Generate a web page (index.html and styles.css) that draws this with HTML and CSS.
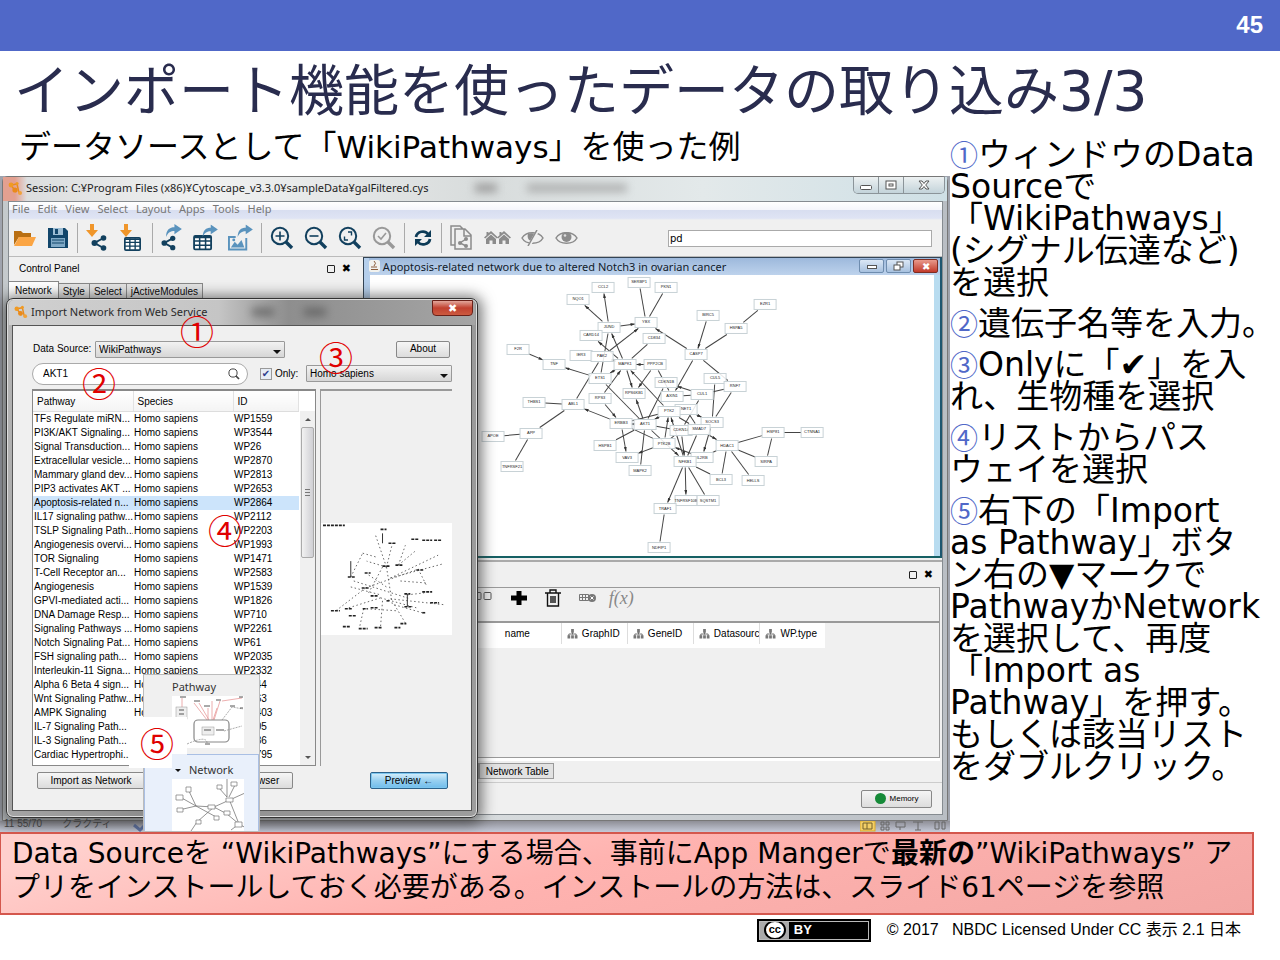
FILE: index.html
```html
<!DOCTYPE html>
<html lang="ja">
<head>
<meta charset="utf-8">
<title>インポート機能を使ったデータの取り込み3/3</title>
<link rel="stylesheet" href="styles.css">
</head>
<body>
<svg class="defs" width="0" height="0" aria-hidden="true">
  <defs>
    <marker id="tip" viewBox="0 0 6 4" refX="6" refY="2" markerWidth="5" markerHeight="3" markerUnits="userSpaceOnUse" orient="auto"><path d="M0 0L6 2L0 4Z" fill="#333"/></marker>
    <symbol id="cyto" viewBox="0 0 16 16"><path d="M4 5L10 4M4 5L9 12M10 4L12 13" stroke="#e98b1c" stroke-width="1.5"/><circle cx="4" cy="5" r="2.4" fill="#f09a22"/><circle cx="10" cy="3.500" r="1.600" fill="#f09a22"/><circle cx="8" cy="10" r="2.600" fill="#ea8a1a"/><circle cx="13" cy="13" r="2" fill="#f0a23a"/></symbol>
    <symbol id="share" viewBox="0 0 16 16"><path d="M12.500 3L3.500 8L12.500 13" fill="none" stroke="currentColor" stroke-width="2"/><circle cx="12.500" cy="3" r="2.800" fill="currentColor"/><circle cx="3.500" cy="8" r="3" fill="currentColor"/><circle cx="12.500" cy="13" r="2.800" fill="currentColor"/></symbol>
    <symbol id="grid" viewBox="0 0 16 13"><rect x=".8" y=".8" width="14.400" height="11.400" rx="1" fill="#fff" stroke="currentColor" stroke-width="1.600"/><path d="M1 2h14M1 5h14M1 8.500h14M5.500 1v11M10.500 1v11" stroke="currentColor" stroke-width="1.300"/></symbol>
    <symbol id="down" viewBox="0 0 12 13"><path d="M4 0h4v6h4L6 13L0 6h4z" fill="#f0962a"/></symbol>
    <symbol id="out" viewBox="0 0 18 14"><path d="M1 14C1 6 5 3.500 10 3.500V0L18 5.500L10 11V7.500C6 7.500 3 9 1 14z" fill="#5a93bd"/></symbol>
    <symbol id="lens" viewBox="0 0 24 24"><circle cx="10" cy="10" r="8.200" fill="none" stroke="currentColor" stroke-width="2"/><path d="M16 16L22 22" stroke="currentColor" stroke-width="3.400"/></symbol>
    <symbol id="tree" viewBox="0 0 12 11"><path d="M6 3v3M2 8V5.500h8V8" fill="none" stroke="#666"/><path d="M4.500 0h3v4h-3zM.5 7h3v3.500h-3zM4.500 7h3v3.500h-3zM8.500 7h3v3.500h-3z" fill="#777"/></symbol>
    <symbol id="house" viewBox="0 0 14 13"><path d="M7 0L14 6.500L12.800 7.600L7 2.400L1.200 7.600L0 6.500L2.500 4.200V1h2v1.300zM7 3.500L12 8v5H8.500V9.500h-3V13H2V8z" fill="#8b8b8b"/></symbol>
  </defs>
</svg>
<div class="slide">
  <header class="band">45</header>
  <h1 class="title">インポート機能を使ったデータの取り込み3/3</h1>
  <main class="columns">
    <section class="left">
      <p class="subtitle">データソースとして「<span class="lat">WikiPathways</span>」を使った例</p>
      <div class="desktop">
        <div class="app">
          <div class="app-title">
            <svg width="16" height="16"><use href="#cyto"/></svg>
            <span>Session: C:¥Program Files (x86)¥Cytoscape_v3.3.0¥sampleData¥galFiltered.cys</span>
            <span class="ghosts"><i></i><i class="wide"></i></span>
            <span class="winbtns">
              <button aria-label="Minimize"><svg width="12" height="10"><rect x=".5" y="5.500" width="11" height="4" rx="1" fill="#fff" stroke="#555"/></svg></button>
              <button aria-label="Maximize"><svg width="12" height="10"><rect x="1" y="1" width="10" height="8" fill="#fff" stroke="#555"/><rect x="4" y="4" width="4" height="2" fill="#fff" stroke="#555"/></svg></button>
              <button class="wide" aria-label="Close"><svg width="12" height="10" viewBox="0 0 12 10"><path d="M1 1h3l2 2.500L8 1h3L7.700 5L11 9H8L6 6.500L4 9H1l3.300-4z" fill="#fff" stroke="#555"/></svg></button>
            </span>
          </div>
          <div class="app-body">
            <nav class="menubar"><a href="#">File</a><a href="#">Edit</a><a href="#">View</a><a href="#">Select</a><a href="#">Layout</a><a href="#">Apps</a><a href="#">Tools</a><a href="#">Help</a></nav>
            <div class="toolbar">
              <button aria-label="Open"><svg width="24" height="20" viewBox="0 0 24 20"><path d="M1 17V3h7l2 2h8v4H6z" fill="#b96f12"/><path d="M6 9h17l-4 9H1z" fill="#fba544"/></svg></button>
              <button aria-label="Save"><svg width="22" height="22" viewBox="0 0 22 22"><path d="M1 1h17l3 3v17H1z" fill="#12466b"/><rect x="6" y="1" width="10" height="7" fill="#9dbdd4"/><rect x="8" y="2" width="3" height="5" fill="#12466b"/><rect x="4" y="11" width="14" height="9" fill="#7fa9c6"/><path d="M5 13h12M5 16h12" stroke="#12466b"/></svg></button>
              <hr>
              <button aria-label="Import network"><svg class="navy" width="24" height="28" viewBox="0 0 24 28"><use href="#down" x="0" y="0" width="12" height="13"/><use href="#share" x="5" y="11" width="16" height="16"/></svg></button>
              <button aria-label="Import table"><svg class="navy" width="24" height="28" viewBox="0 0 24 28"><use href="#down" x="0" y="0" width="12" height="13"/><use href="#grid" x="4" y="13" width="17" height="14"/></svg></button>
              <hr>
              <button aria-label="Export network"><svg class="navy" width="22" height="28" viewBox="1 0 22 28"><use href="#share" x="1" y="11" width="15" height="16"/><use href="#out" x="5" y="0" width="17" height="13"/></svg></button>
              <button aria-label="Export table"><svg class="navy" width="25" height="28" viewBox="0 0 26 28"><use href="#grid" x="0" y="11" width="20" height="16"/><use href="#out" x="9" y="0" width="17" height="13"/></svg></button>
              <button aria-label="Export image"><svg width="25" height="28" viewBox="0 0 26 28"><path d="M8 13H1v13h18V14" fill="none" stroke="#5a93bd" stroke-width="2"/><path d="M3 24l4-6l3 3l4-5l3 8z" fill="#5a93bd"/><circle cx="6" cy="16" r="1.500" fill="#5a93bd"/><use href="#out" x="9" y="0" width="17" height="13"/></svg></button>
              <hr>
              <button aria-label="Zoom in"><svg class="navy" width="24" height="24" viewBox="0 0 24 24"><use href="#lens"/><path d="M5.500 10h9M10 5.500v9" stroke="currentColor" stroke-width="1.600"/></svg></button>
              <button aria-label="Zoom out"><svg class="navy" width="24" height="24" viewBox="0 0 24 24"><use href="#lens"/><path d="M5.500 10h9" stroke="currentColor" stroke-width="1.600"/></svg></button>
              <button aria-label="Fit content"><svg class="navy" width="24" height="24" viewBox="0 0 24 24"><use href="#lens"/><path d="M10 6h3.500v3.500M10 14H6.500v-3.500" fill="none" stroke="currentColor" stroke-width="1.400"/></svg></button>
              <button aria-label="Fit selected"><svg class="grey" width="24" height="24" viewBox="0 0 24 24"><use href="#lens"/><path d="M6 10l3 3l5-6" fill="none" stroke="currentColor" stroke-width="1.600"/></svg></button>
              <hr>
              <button aria-label="Refresh"><svg width="20" height="18" viewBox="0 0 20 18"><path d="M3 8C4 2 12 1 15 5M17 10C16 16 8 17 5 13" fill="none" stroke="#0d3b57" stroke-width="2.800"/><path d="M18 1v7h-7zM2 17v-7h7z" fill="#0d3b57"/></svg></button>
              <hr>
              <button aria-label="New from selection"><svg width="24" height="26" viewBox="0 0 24 26"><path d="M5 20H1V1h9l3 3M5 4h10l6 6v14H5zM14 4v7h7" fill="#f0f0f0" stroke="#8b8b8b" stroke-width="1.500"/><path d="M16 14l-6 4l6 3" fill="none" stroke="#8b8b8b" stroke-width="1.500"/><circle cx="16" cy="14" r="2" fill="#8b8b8b"/><circle cx="10" cy="18" r="2" fill="#8b8b8b"/><circle cx="16" cy="21" r="2" fill="#8b8b8b"/></svg></button>
              <button aria-label="First neighbours"><svg width="27" height="14" viewBox="0 0 27 14"><use href="#house" x="0" y="0" width="14" height="13"/><use href="#house" x="13" y="0" width="14" height="13"/></svg></button>
              <button aria-label="Hide"><svg width="24" height="16" viewBox="0 0 24 16"><path d="M1 8C5 1 18 1 22 8C18 15 5 15 1 8z" fill="none" stroke="#8b8b8b" stroke-width="1.500"/><path d="M7 4c5-2 8 0 7 3l-4 4c-3-1-4-4-3-7z" fill="#8b8b8b"/><path d="M17 0L8 16" stroke="#f0f0f0" stroke-width="3"/><path d="M16 0L7 16" stroke="#8b8b8b" stroke-width="1.500"/></svg></button>
              <button aria-label="Show"><svg width="24" height="16" viewBox="0 0 24 16"><path d="M1 8C5 1 18 1 22 8C18 15 5 15 1 8z" fill="#f0f0f0" stroke="#8b8b8b" stroke-width="1.500"/><circle cx="11.500" cy="7" r="5" fill="#8b8b8b"/><circle cx="10" cy="5.500" r="1.300" fill="#ddd"/></svg></button>
              <input class="find" type="text" value="pd" aria-label="Search">
            </div>
            <div class="workspace">
              <aside class="control">
                <div class="panel-head"><span>Control Panel</span><span class="marks"><b class="sq"></b><b class="x">✖</b></span></div>
                <div class="tabs"><button class="on">Network</button><button>Style</button><button>Select</button><button>jActiveModules</button></div>
              </aside>
              <div class="right-pane">
                <section class="frame">
                  <div class="frame-title">
                    <svg width="11" height="12" viewBox="0 0 11 12"><rect width="11" height="12" rx="2" fill="#f2f2ee"/><path d="M5 1q3 2 0 5M2 7h6M2 9.500h7" stroke="#8a5b3a" fill="none"/></svg>
                    <span>Apoptosis-related network due to altered Notch3 in ovarian cancer</span>
                    <span class="frame-btns">
                      <button aria-label="Minimize"><svg width="10" height="8"><rect x=".5" y="3.500" width="9" height="3" fill="#fff" stroke="#555"/></svg></button>
                      <button aria-label="Restore"><svg width="12" height="10"><rect x="4" y="1" width="6" height="5" fill="#fff" stroke="#555"/><rect x="1" y="4" width="6" height="5" fill="#fff" stroke="#555"/></svg></button>
                      <button class="red" aria-label="Close">✖</button>
                    </span>
                  </div>
                  <div class="canvas"><svg id="network" viewBox="371 276 564 280" role="img" aria-label="Apoptosis-related network"></svg></div>
                </section>
                <section class="table-panel">
                  <div class="panel-head"><span></span><span class="marks"><b class="sq"></b><b class="x">✖</b></span></div>
                  <div class="table-box">
                    <div class="table-tools">
                      <svg width="24" height="12"><rect x="5" y="2.500" width="7" height="7" rx="1" fill="none" stroke="#555"/><rect x="15" y="2.500" width="7" height="7" rx="1" fill="none" stroke="#555"/></svg>
                      <button aria-label="Add column"><svg width="16" height="16"><path d="M5.500 1h5v4.500H16v5h-5.500V15h-5v-4.500H0v-5h5.500z" fill="#000"/></svg></button>
                      <button aria-label="Delete column"><svg width="16" height="18" viewBox="0 0 16 18"><path d="M0 4h16M5 4V1h6v3M2.500 4v13h11V4M6 7v7M8 7v7M10 7v7" fill="none" stroke="#111" stroke-width="1.400"/></svg></button>
                      <button aria-label="Delete table"><svg width="18" height="10" viewBox="0 0 18 10"><path d="M.5 1.500h9v6h-9zM.5 4.500h9M3.500 1.500v6M6.500 1.500v6" fill="none" stroke="#777"/><circle cx="13" cy="5" r="4" fill="#777"/><path d="M11.500 3.500l3 3m0-3l-3 3" stroke="#fff"/></svg></button>
                      <button class="fx">f(x)</button>
                    </div>
                    <div class="cols"><span class="name">name</span><span><svg width="11" height="10"><use href="#tree"/></svg>GraphID</span><span><svg width="11" height="10"><use href="#tree"/></svg>GeneID</span><span><svg width="11" height="10"><use href="#tree"/></svg>Datasourc</span><span><svg width="11" height="10"><use href="#tree"/></svg>WP.type</span></div>
                  </div>
                  <div class="btabs"><button>Edge Table</button><button>Network Table</button></div>
                </section>
              </div>
            </div>
            <footer class="status"><button class="memory"><i></i>Memory</button></footer>
          </div>
        </div>
        <div class="taskbar"><span>11 55/70</span><span>クラクティ</span><svg width="16" height="12"><path d="M2 4l6 5l6-6" fill="none" stroke="#5b6f9f" stroke-width="3"/></svg><span class="views"><svg width="86" height="12"><rect x="0" y="0" width="15" height="10" fill="#f3cf67" stroke="#d9a92c"/><path d="M3 2h9v6H3zM7 2v6" fill="none" stroke="#75632c"/><path d="M21 1h3v3h-3zM26 1h3v3h-3zM21 6h3v3h-3zM26 6h3v3h-3zM36 1h9v5h-9zM40 6v3M53 1h10M58 1v8M55 9h6M75 1h4v7h-4zM82 1h3v7h-3z" fill="none" stroke="#666"/></svg></span></div>

        <div class="dialog" role="dialog" aria-label="Import Network from Web Service">
          <div class="dlg-title"><svg width="15" height="15"><use href="#cyto"/></svg><span>Import Network from Web Service</span><span class="ghosts"><i></i><i></i></span><button class="close" aria-label="Close">✖</button></div>
          <div class="dlg-body">
            <div class="row source"><label for="src">Data Source:</label><span class="pick"><select id="src"><option>WikiPathways</option></select></span><button class="btn about">About</button></div>
            <div class="row query">
              <span class="search"><input type="text" value="AKT1" aria-label="Query"><svg width="12" height="12" viewBox="0 0 24 24"><use href="#lens" color="#444"/></svg></span>
              <label class="only"><input type="checkbox" checked>Only:</label>
              <span class="pick species"><select aria-label="Species"><option>Homo sapiens</option></select></span>
            </div>
            <div class="split">
              <div class="list">
                <table><thead><tr><th>Pathway</th><th>Species</th><th>ID</th></tr></thead><tbody id="rows"></tbody></table>
                <div class="scroll"><i class="up"></i><b></b><i class="dn"></i></div>
              </div>
              <div class="preview"><svg id="thumb" viewBox="0 0 132 112"></svg></div>
            </div>
            <div class="row actions"><button class="btn">Import as Network</button><button class="btn browse">Open in Browser</button><button class="btn blue">Preview ←</button></div>
          </div>
        </div>

        <div class="popup">
          <button>Pathway
            <svg viewBox="0 0 72 52" width="72" height="52"><rect width="72" height="52" fill="#fff"/><g stroke="#e89a9a" stroke-width=".8"><path d="M10 2v22M22 7l13 17M27 7l10 17M36 12v12M40 5v19M45 12l-4 12M48 5l-6 19M50 5l20-3"/></g><path d="M50 24l10-13l11 2M52 35l18-5M15 48q20-9 20-1" fill="none" stroke="#888" stroke-width=".7" stroke-dasharray="2 1"/><g fill="#eee" stroke="#999" stroke-width=".5"><rect x="4" y="11" width="11" height="12"/><rect x="30" y="31" width="12" height="8"/></g><rect x="22" y="24" width="35" height="22" rx="4" fill="none" stroke="#888" stroke-width="1.200"/><path d="M7 14h5M7 18h5M32 34h7M8 1h6M22 5h6M32 10h6M44 4h5M58 10h5M67 1h4M68 12h3M10 27h4M44 34h8M33 48h5" stroke="#555"/></svg>
          </button>
          <button class="sel"><i></i>Network
            <svg viewBox="0 0 72 52" width="72" height="52"><rect width="72" height="52" fill="#fff"/><path fill="none" stroke="#666" stroke-width=".7" d="M16 10l8 17L8 18M7 31l17-4l22 12M24 27l18 1l31-14M55 18L47 9M55 18V0M57 18l6-12M42 28l-17 15M57 20l10 25M67 45l-12-10l-13-7M67 45l7 4M67 45l-8 6M25 43l-6 9"/><g fill="#fff" stroke="#777" stroke-width=".7"><path d="M14 8h5v5h-5zM4 16h7v5H4zM5 29h6v4H5zM36 26h7v4h-7zM45 6h5v4h-5zM59 3h6v4h-6zM54 19h7v4h-7zM42 37h5v4h-5zM63 43h7v5h-7zM24 41h5v4h-5zM52 32h6v4h-6z"/></g></svg>
          </button>
        </div>
        <span class="call c1">①</span><span class="call c2">②</span><span class="call c3">③</span><span class="call c4">④</span><span class="call c5">⑤</span>
      </div>
    </section>
    <section class="steps">
      <p><em>①</em>ウィンドウのData<br>Sourceで<br>「WikiPathways」<br>(シグナル伝達など)<br>を選択</p>
      <p><em>②</em>遺伝子名等を入力。</p>
      <p><em>③</em>Onlyに「✔」を入<br>れ、生物種を選択</p>
      <p><em>④</em>リストからパス<br>ウェイを選択</p>
      <p><em>⑤</em>右下の「Import<br>as Pathway」ボタ<br>ン右の▼マークで<br>PathwayかNetwork<br>を選択して、再度<br>「Import as<br>Pathway」を押す。<br>もしくは該当リスト<br>をダブルクリック。</p>
    </section>
  </main>
  <div class="note">Data Sourceを “WikiPathways”にする場合、事前にApp Mangerで<strong>最新の</strong>”WikiPathways” ア<br>プリをインストールしておく必要がある。インストールの方法は、スライド61ページを参照</div>
  <footer class="license">
    <span class="badge"><span class="cc">cc</span><span class="by">BY</span></span>
    <span>© 2017&nbsp;&nbsp; NBDC Licensed Under CC 表示 2.1 日本</span>
  </footer>
</div>
<script src="script.js"></script>
</body>
</html>
```

FILE: styles.css
```css
* { box-sizing: border-box; }
body { margin: 0; background: #fff; color: #000; font-family: "DejaVu Sans", "Noto Sans CJK JP", sans-serif; }
button, input, select { font: inherit; color: inherit; margin: 0; }
button { border: 0; padding: 0; background: none; }
svg { flex: none; }
.defs { position: absolute; }
.slide { min-height: 100vh; overflow: hidden; }
.band { height: 51px; padding-right: 17px; background: #5068c8; color: #fff; font: bold 24px/50px "Liberation Sans", sans-serif; text-align: right; }
.title { margin: 0; height: 77px; padding-left: 14px; color: #292c4e; font-size: 55px; font-weight: 400; line-height: 80px; white-space: nowrap; }
.columns { display: grid; grid-template-columns: 950fr 330fr; height: 704px; }
.left { min-width: 0; }
.subtitle { margin: 0; height: 48px; padding-left: 19px; font-size: 32px; line-height: 38px; white-space: nowrap; }
.subtitle .lat { font-size: 31px; }

/* Steps on the right */
.steps { font-size: 33px; line-height: 32px; padding-top: 11px; white-space: nowrap; }
.steps p { margin: 0 0 9px; }
.steps em { color: #5068c8; font-style: normal; font-size: 28px; line-height: 28px; font-family: "Noto Sans CJK JP", sans-serif; }

/* Desktop capture */
.desktop { position: relative; height: 656px; overflow: hidden; background: #9fa3ad; font: 10px/14px "Liberation Sans", "Noto Sans CJK JP", sans-serif; }
.app { margin: 0 2px; height: 645px; padding: 0 4px 5px 5px; border: 1px solid #777; border-radius: 6px 6px 0 0; background: linear-gradient(90deg, #c4c9cc, #d8dcde 50%, #b9bec4); display: flex; flex-direction: column; }
.app-title { height: 24px; display: flex; align-items: center; gap: 3px; font: 11px/20px "Noto Sans", sans-serif; color: #222; white-space: nowrap; background: linear-gradient(90deg, #e3a090 0, #e3a090 12px, #dcdedf 24px, #f0f1f1 200px, #d8dcdc 480px, #e3e9ea 700px, #cfe0e6); margin: 0 -4px 0 -5px; padding: 0 0 2px 4px; }
.ghosts { display: flex; gap: 30px; margin-left: 44px; flex: 1; }
.ghosts i { width: 22px; height: 8px; background: #999; filter: blur(4px); }
.ghosts .wide { width: 100px; opacity: .7; }
.winbtns { display: flex; align-self: flex-start; margin-right: 2px; border: 1px solid #8b9499; border-top: 0; border-radius: 0 0 5px 5px; overflow: hidden; }
.winbtns button { width: 25px; height: 16px; line-height: 10px; border-right: 1px solid #8b9499; background: linear-gradient(#edf1f2, #c3d3da); }
.winbtns .wide { width: 40px; border: 0; }
.app-body { flex: 1; min-height: 0; display: flex; flex-direction: column; border: 1px solid #858b90; background: #f0f0f0; }
.menubar { height: 18px; display: flex; gap: 8px; padding-left: 3px; font: 11px/14px "Noto Sans", sans-serif; background: linear-gradient(#fff 0, #f4f5fb 45%, #d8def0 46%, #dfe4f4 90%, #f0f0f0); }
.menubar a { color: #777; text-decoration: none; }
.toolbar { height: 37px; display: flex; align-items: center; gap: 10px; padding: 0 10px 0 4px; border-bottom: 1px solid #bbb; }
.toolbar button { display: flex; }
.toolbar hr { width: 1px; height: 30px; margin: 0 -2px; border: 0; background: #aaa; }
.navy { color: #12405e; } .grey { color: #999; }
.find { width: 264px; height: 17px; margin-left: auto; border: 1px solid #aaa; background: #fff; padding: 0 1px; font: 10px "DejaVu Sans", sans-serif; }
.workspace { flex: 1; min-height: 0; display: grid; grid-template-columns: 355fr 581fr; }
.control { background: #f0f0f0; }
.panel-head { display: flex; justify-content: space-between; align-items: center; height: 25px; padding: 0 12px 0 10px; }
.control .panel-head { height: 24px; }
.marks { display: flex; align-items: center; gap: 7px; }
.sq { width: 8px; height: 8px; border: 1px solid #222; border-radius: 1px; }
.x { font: bold 11px/12px "DejaVu Sans", sans-serif; }
.tabs { display: flex; align-items: flex-end; }
.tabs button { height: 17px; padding: 0 4px; border: 1px solid #888; border-left: 0; background: #e4e4e4; }
.tabs .on { height: 19px; padding: 0 6px; background: #fff; }
.right-pane { display: flex; flex-direction: column; min-width: 0; }
.frame { border: 1px solid #345; border-right: 2px solid #1d5670; border-bottom: 2px solid #166064; background: #b5cfec; padding-left: 6px; }
.frame-title { height: 17px; display: flex; align-items: center; gap: 3px; color: #111b2a; font: 11px/15px "Noto Sans", sans-serif; white-space: nowrap; background: linear-gradient(#9db9dc, #bdd2ec); margin-left: -1px; padding-bottom: 1px; }
.frame-btns { margin-left: auto; display: flex; gap: 2px; padding-right: 2px; }
.frame-btns button { width: 25px; height: 14px; border: 1px solid #6e8cae; border-radius: 2px; background: linear-gradient(#dbe7f5, #a7c1df); line-height: 10px; }
.frame-btns .red { background: linear-gradient(#e99a8c, #c23a2a); color: #fff; font-size: 10px; border-color: #7e2d22; }
.canvas { background: #fff; border-right: 6px solid #b8dcf0; }
.canvas svg { display: block; width: 100%; height: 281px; }
.canvas line { stroke: #444; stroke-width: 1; }
.canvas rect { fill: #fff; fill-opacity: .88; stroke: #c8d2d6; stroke-width: 1; }
.canvas text { font: 4px "Liberation Sans", sans-serif; text-anchor: middle; fill: #222; }
.table-panel { flex: 1; display: flex; flex-direction: column; border-top: 2px solid #aaa; margin-top: 2px; }
.table-panel .panel-head { padding-right: 9px; }
.table-box { flex: 1; margin-right: 2px; border: 1px solid #9a9a9a; border-left: 0; box-shadow: 0 3px 0 #fff; }
.table-tools { height: 35px; display: flex; align-items: flex-start; gap: 18px; padding: 2px 0 0 106px; border-bottom: 2px solid #999; }
.table-tools > * { height: 16px; display: flex; align-items: center; }
.table-tools .fx { font: italic 18px/16px "Liberation Serif", serif; color: #888; margin-left: -6px; }
.cols { display: flex; width: 462px; height: 25px; padding-left: 141px; background: #fff; line-height: 22px; }
.cols span { flex: 0 0 66px; display: flex; align-items: center; gap: 4px; height: 21px; padding-left: 5px; border-left: 1px solid #ddd; white-space: nowrap; }
.cols .name { flex-basis: 123px; margin-left: -66px; padding-left: 67px; border: 0; }
.btabs { height: 25px; padding: 5px 0 4px 54px; display: flex; border-bottom: 1px solid #ccc; }
.btabs button { border: 1px solid #999; background: #e2e2e2; padding: 0 4px 0 6px; height: 16px; line-height: 13px; }
.status { height: 31px; display: flex; justify-content: flex-end; align-items: center; padding-right: 10px; background: #f0f0f0; }
.memory { display: flex; align-items: center; justify-content: center; gap: 4px; width: 71px; height: 18px; border: 1px solid #888; border-radius: 2px; background: linear-gradient(#f5f5f5, #ddd); font-size: 8px; }
.memory i { width: 11px; height: 11px; border-radius: 50%; background: #168a38; }
.taskbar { height: 11px; display: flex; gap: 20px; padding-left: 4px; background: linear-gradient(#8e8e96, #c5cad8); color: #444; line-height: 6px; }
.views { margin-left: auto; padding-right: 4px; }

/* Import dialog */
.dialog { position: absolute; left: 6px; top: 122px; width: 472px; height: 520px; display: flex; flex-direction: column; padding: 0 5px 6px; border: 1px solid #333; border-radius: 7px; background: linear-gradient(100deg, #b5b5b5, #8e8e8e 40%, #9d9d9d); box-shadow: 0 2px 14px 4px #333a, inset 0 0 0 1px #ddd; }
.dlg-title { height: 25px; display: flex; align-items: center; gap: 3px; padding: 0 0 2px 4px; font: 11px/22px "Noto Sans", sans-serif; color: #2a2a2a; background: linear-gradient(90deg, #d0d0d0, #c5c5c5 45%, #8e8e8e 60%, #a5a5a5); margin: 1px -3px 0; border-radius: 5px 5px 0 0; white-space: nowrap; }
.dlg-title .ghosts { margin-left: 42px; }
.dlg-title i { background: #555; opacity: .7; }
.close { align-self: flex-start; width: 41px; height: 16px; margin-right: 2px; border: 1px solid #6a2018; border-radius: 0 0 4px 4px; background: linear-gradient(#e2a69b, #c1412f 50%, #cc5a40); color: #fff; font-size: 11px; line-height: 12px; }
.dlg-body { flex: 1; min-height: 0; background: #f0f0f0; border: 1px solid #555; padding: 14px 19px 21px 20px; display: flex; flex-direction: column; }
.row { display: flex; align-items: center; }
.source { height: 18px; }
.source label { width: 62px; white-space: nowrap; }
.pick { position: relative; width: 190px; height: 17px; }
.pick select { appearance: none; width: 100%; height: 17px; padding: 0 3px; border: 1px solid #999; border-radius: 1px; background: linear-gradient(#f2f2f2, #d6d6d6); line-height: 13px; }
.pick::after { content: ""; position: absolute; right: 4px; bottom: 4px; border: 4px solid transparent; border-top-color: #111; border-bottom: 0; }
.btn { height: 17px; border: 1px solid #888; border-radius: 2px; background: linear-gradient(#f6f6f6, #dcdcdc); white-space: nowrap; }
.about { width: 54px; margin-left: auto; margin-right: 2px; }
.query { height: 31px; }
.search { display: flex; align-items: center; width: 216px; height: 22px; margin-left: -1px; padding: 0 7px 0 10px; border: 1px solid #aaa; border-radius: 11px; background: #fff; }
.search input { flex: 1; min-width: 0; border: 0; padding: 0; background: none; outline: 0; }
.only { display: flex; align-items: center; gap: 3px; margin-left: 12px; white-space: nowrap; }
.only input { appearance: none; width: 12px; height: 12px; border: 1px solid #999; background: #e6ecf5; display: grid; place-items: center; }
.only input::after { content: "✔"; font: 10px/10px "DejaVu Sans", sans-serif; color: #2d3c8c; }
.species { width: 146px; margin-left: auto; }
.split { flex: 1; min-height: 0; display: grid; grid-template-columns: 283px 1fr; gap: 4px; }
.list { display: flex; justify-content: space-between; align-items: flex-start; border: 1px solid #888; border-top-width: 2px; background: #fff; overflow: hidden; margin-left: -1px; }
table { width: 266px; table-layout: fixed; border-collapse: collapse; }
th { height: 20px; text-align: left; font-weight: 400; padding: 3px 4px 0; border-right: 1px solid #e2e2e2; border-bottom: 1px solid #ddd; background: linear-gradient(#fff, #f4f4f4); }
td { height: 14px; padding: 0 1px; line-height: 14px; white-space: nowrap; overflow: hidden; }
th:nth-child(1) { width: 100px; } th:nth-child(2) { width: 100px; }
.picked td { background: #cce4fb; }
.scroll { align-self: stretch; width: 15px; margin-top: 20px; background: #f0f0f0; display: flex; flex-direction: column; align-items: center; }
.scroll b { width: 13px; height: 131px; margin-top: 6px; border: 1px solid #aaa; border-radius: 2px; background: linear-gradient(90deg, #f2f2f2, #cfcfd4); display: grid; place-items: center; }
.scroll b::after { content: ""; width: 5px; height: 7px; background: repeating-linear-gradient(#777 0 1px, transparent 1px 3px); }
.scroll i { border: 3px solid transparent; }
.scroll .up { border-bottom-color: #555; border-top: 0; margin-top: 7px; }
.scroll .dn { border-top-color: #555; border-bottom: 0; margin: auto 0 6px; }
.preview { border: 1px solid #999; border-width: 2px 0 0 1px; display: flex; align-items: center; }
.preview svg { width: 100%; height: 112px; background: #fff; }
.actions { height: 17px; margin-top: 6px; padding-left: 4px; }
.actions .btn:first-child { width: 108px; }
.browse { width: 112px; margin-left: 36px; padding-left: 10px; }
.blue { width: 78px; margin-left: auto; margin-right: 4px; border: 1px solid #2c628b; background: linear-gradient(#d9effb, #98d0f0 50%, #6fbcec); box-shadow: inset 0 0 0 1px #7cc6ee; }

/* Import type menu and callouts */
.popup { position: absolute; left: 143px; top: 498px; width: 117px; height: 158px; border: 1px solid #bbb; background: #f0f0f0; font: 11px/18px "Noto Sans", sans-serif; color: #333; overflow: hidden; }
.popup button { display: block; width: 100%; height: 76px; padding-left: 28px; text-align: left; }
.popup svg { display: block; }
.popup .sel { position: relative; height: 79px; margin-top: 3px; padding-top: 4px; padding-left: 44px; background: #e9f0fb; border: 1px solid #a9bfe4; }
.popup .sel svg { margin-left: -17px; }
.popup .sel i { position: absolute; left: 30px; top: 14px; border: 3px solid transparent; border-top-color: #111; border-bottom: 0; }
.call { position: absolute; color: #e00000; font: 34px/34px "Noto Sans CJK JP", sans-serif; }
.c1 { left: 180px; top: 138px; } .c2 { left: 82px; top: 190px; } .c3 { left: 319px; top: 164px; } .c4 { left: 208px; top: 337px; }
.c5 { left: 129px; top: 541px; width: 58px; height: 51px; padding: 9px 0 0 11px; background: #fff; clip-path: polygon(0 0, 100% 0, 100% 74%, 74% 74%, 74% 100%, 0 100%); }

.note { width: 98%; height: 83px; padding: 3px 0 0 11px; border: 2px solid #d4574d; border-left-width: 1px; background: linear-gradient(165deg, #ffd0cd 8%, #ffb3b0 45%, #f3a7a4); font-size: 28px; line-height: 34px; white-space: nowrap; }
.license { display: flex; justify-content: flex-end; align-items: center; gap: 16px; padding: 3px 39px 0 0; font: 16px/24px "Liberation Sans", "Noto Sans CJK JP", sans-serif; }
.badge { display: flex; align-items: center; width: 114px; height: 23px; border: 2px solid #000; outline: 1px solid #bbb; outline-offset: -3px; background: linear-gradient(90deg, #aaa 30px, #000 30px); color: #fff; }
.cc { width: 22px; height: 20px; margin-left: 5px; border: 2px solid #000; border-radius: 50%; background: #fff; color: #000; font: bold 11px/14px "Liberation Sans", sans-serif; text-align: center; }
.by { margin-left: 8px; font: bold 13px/18px "Liberation Sans", sans-serif; }
```

FILE: script.js
```js
const NS = "http://www.w3.org/2000/svg";
const make = (parent, tag, attrs, text) => {
  const el = document.createElementNS(NS, tag);
  for (const k in attrs) el.setAttribute(k, attrs[k]);
  if (text) el.textContent = text;
  parent.appendChild(el);
};

const nodes = {
  CCL2: [604, 288], NQO1: [579, 300], SERBP1: [640, 283], PKN1: [667, 288], JUND: [610, 328], YBX: [647, 323],
  CARD14: [592, 336], CD834: [655, 339], F2R: [519, 350], TNF: [555, 365], IER3: [582, 356], PAK2: [603, 357],
  MAPK1: [626, 365], PPP2CB: [656, 365], ETS1: [601, 379], BIRC5: [709, 316], CASP7: [697, 355], HSPA5: [737, 329],
  EZR1: [766, 305], CDKN1B: [667, 383], CUL5: [716, 379], RNF7: [736, 387], CUL1: [703, 395], AXIN1: [673, 397],
  RPS6KB1: [635, 394], RPS3: [601, 399], THBS1: [535, 403], ABL1: [574, 405], NET1: [687, 410], PTK2: [670, 412],
  SOCS3: [713, 423], ERBB3: [622, 424], AKT1: [646, 425], CDKN14: [682, 431], SMAD7: [700, 430], APOE: [494, 437],
  APP: [532, 434], PTK2B: [665, 444], HDAC1: [728, 446], HSP81: [774, 433], CTNNA1: [813, 433], HSPB1: [606, 446],
  VAV3: [628, 458], IL2RB: [703, 458], NFKB1: [686, 462], SIRPA: [767, 462], TNFRSF21: [513, 467], MAPK2: [641, 471],
  BCL3: [722, 480], HELLS: [754, 481], TNFRSF10B: [687, 501], SQSTM1: [709, 501], TRAF1: [666, 509], NDFIP1: [660, 548]
};
// ">" draws an arrowhead at the second node, "-" a plain line
const edges = `JUND>CCL2 JUND>NQO1 SERBP1-YBX PKN1-YBX JUND>YBX PAK2>YBX MAPK1>JUND MAPK1>CARD14 MAPK1-CD834 F2R>TNF
ETS1>TNF JUND-ETS1 PAK2-ABL1 PAK2>MAPK1 MAPK1>ETS1 PPP2CB>MAPK1 PPP2CB>RPS6KB1 PPP2CB-AXIN1 MAPK1>RPS6KB1 RPS3>MAPK1
RPS3>ERBB3 ETS1-AKT1 THBS1-ABL1 ABL1-APP APOE-APP APP-TNFRSF21 ERBB3>ABL1 ERBB3>VAV3 AKT1>RPS6KB1 PTK2>MAPK1
CASP7>YBX BIRC5>CASP7 CASP7-HSPA5 HSPA5-EZR1 CASP7-RNF7 CASP7>AXIN1 CUL1>CDKN1B CUL1-RNF7 CUL1-AXIN1 CUL1-CDKN14
CUL5-SOCS3 RNF7-SOCS3 CDKN1B-AKT1 PTK2>AKT1 ERBB3-PTK2 AKT1-HSPB1 AKT1-MAPK2 AKT1-CDKN14 ERBB3-PTK2B PTK2B>VAV3
PTK2B>PTK2 PTK2-SMAD7 NET1>SOCS3 NET1-SMAD7 AKT1>NFKB1 NFKB1>PTK2 CDKN14>NFKB1 SMAD7-NFKB1 SOCS3>IL2RB IL2RB>PTK2B
IL2RB-HDAC1 SMAD7>HDAC1 HDAC1-HSP81 HSP81-CTNNA1 HSP81-SIRPA HDAC1-SIRPA HDAC1-HELLS HDAC1-BCL3 NFKB1-BCL3
NFKB1>TNFRSF10B NFKB1-SQSTM1 NFKB1>TRAF1 TRAF1-NDFIP1 PTK2B-CDKN14 AKT1>ERBB3`.split(/\s+/);

const net = document.getElementById("network");
for (const e of edges) {
  const [a, b] = e.split(/[->]/);
  const [x1, y1] = nodes[a], [x2, y2] = nodes[b];
  const dx = x2 - x1, dy = y2 - y1;
  const t = Math.min(11 / Math.max(Math.abs(dx), 1), 6 / Math.max(Math.abs(dy), 1), 0.4);
  const attrs = { x1: x1 + dx * t, y1: y1 + dy * t, x2: x2 - dx * t, y2: y2 - dy * t };
  if (e.includes(">")) attrs["marker-end"] = "url(#tip)";
  make(net, "line", attrs);
}
for (const [name, [x, y]] of Object.entries(nodes)) {
  make(net, "rect", { x: x - 11, y: y - 5, width: 22, height: 10 });
  make(net, "text", { x, y: y + 1 }, name);
}

const pathways = [
  ["TFs Regulate miRN...", "WP1559"], ["PI3K/AKT Signaling...", "WP3544"], ["Signal Transduction...", "WP26"],
  ["Extracellular vesicle...", "WP2870"], ["Mammary gland dev...", "WP2813"], ["PIP3 activates AKT ...", "WP2653"],
  ["Apoptosis-related n...", "WP2864"], ["IL17 signaling pathw...", "WP2112"], ["TSLP Signaling Path...", "WP2203"],
  ["Angiogenesis overvi...", "WP1993"], ["TOR Signaling", "WP1471"], ["T-Cell Receptor an...", "WP2583"],
  ["Angiogenesis", "WP1539"], ["GPVI-mediated acti...", "WP1826"], ["DNA Damage Resp...", "WP710"],
  ["Signaling Pathways ...", "WP2261"], ["Notch Signaling Pat...", "WP61"], ["FSH signaling path...", "WP2035"],
  ["Interleukin-11 Signa...", "WP2332"], ["Alpha 6 Beta 4 sign...", "WP244"], ["Wnt Signaling Pathw...", "WP363"],
  ["AMPK Signaling", "WP1403"], ["IL-7 Signaling Path...", "WP205"], ["IL-3 Signaling Path...", "WP286"],
  ["Cardiac Hypertrophi...", "WP2795"]
];
const body = document.getElementById("rows");
for (const [name, id] of pathways) {
  const tr = body.insertRow();
  if (id === "WP2864") tr.className = "picked";
  for (const v of [name, "Homo sapiens", id]) tr.insertCell().textContent = v;
}

// Preview: dashed spokes between small clusters
const thumb = document.getElementById("thumb");
const spokes = [[66, 44, 55, 12], [66, 44, 72, 20], [78, 42, 85, 22], [78, 42, 96, 27], [70, 55, 118, 32], [70, 55, 122, 41],
  [30, 54, 42, 30], [42, 30, 56, 34], [45, 65, 15, 88], [45, 65, 98, 46], [60, 75, 28, 85], [60, 75, 96, 85], [70, 76, 125, 82],
  [87, 72, 104, 70], [62, 78, 60, 104], [74, 82, 86, 102], [74, 82, 102, 90], [43, 86, 39, 104], [46, 86, 76, 88], [33, 58, 90, 76],
  [66, 44, 72, 82], [30, 64, 60, 72], [48, 52, 66, 64], [80, 58, 106, 60], [98, 46, 106, 62], [66, 44, 46, 38], [62, 44, 48, 70]];
for (const [x1, y1, x2, y2] of spokes) make(thumb, "line", { x1, y1, x2, y2, stroke: "#555", "stroke-width": .9, "stroke-dasharray": "1.500 2.500" });
const marks = [[2, 2, 22], [60, 6, 6], [68, 20, 8], [91, 16, 8], [102, 17, 10], [114, 17, 8], [62, 43, 8], [75, 42, 7], [27, 54, 8],
  [44, 50, 6], [41, 65, 8], [96, 47, 8], [102, 69, 10], [84, 71, 6], [84, 84, 8], [10, 88, 9], [24, 86, 7], [42, 86, 5], [50, 85, 8],
  [38, 106, 9], [22, 104, 7], [54, 105, 8], [74, 105, 6], [80, 101, 6], [110, 80, 9], [50, 73, 8], [102, 90, 4], [66, 78, 4], [28, 93, 8]];
for (const [x, y, w] of marks) make(thumb, "path", { d: `M${x} ${y}h${w}`, stroke: "#222", "stroke-width": 1.6, "stroke-dasharray": "3 1" });
make(thumb, "path", { d: "M30 38v16M87 71v13M62 10v10", stroke: "#333" });
```
